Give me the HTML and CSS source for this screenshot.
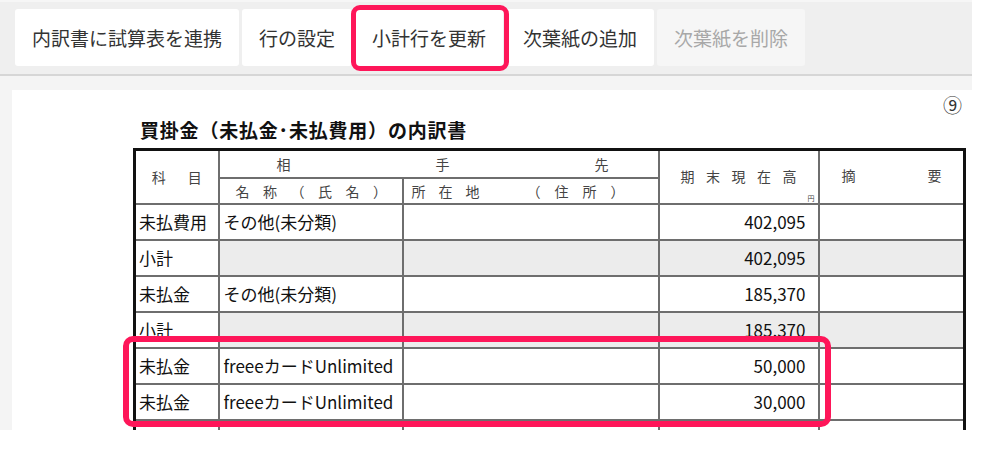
FILE: index.html
```html
<!DOCTYPE html>
<html lang="ja">
<head>
<meta charset="utf-8">
<title>内訳書</title>
<link rel="stylesheet" href="styles.css">
</head>
<body>
<div class="frame">
  <div class="toolbar">
    <button class="tb-btn">内訳書に試算表を連携</button>
    <button class="tb-btn">行の設定</button>
    <button class="tb-btn">小計行を更新</button>
    <button class="tb-btn">次葉紙の追加</button>
    <button class="tb-btn is-disabled">次葉紙を削除</button>
  </div>
  <div class="workspace">
    <div class="paper">
      <div class="page-no">⑨</div>
      <h1 class="doc-title">買掛金（未払金･未払費用）の内訳書</h1>
      <table class="sheet">
        <colgroup>
          <col class="c-kamoku">
          <col class="c-name">
          <col class="c-addr">
          <col class="c-amount">
          <col class="c-note">
        </colgroup>
        <thead>
          <tr class="h1">
            <th rowspan="2" class="th-kamoku">科　目</th>
            <th colspan="2" class="th-aite"><span>相</span><span>手</span><span>先</span></th>
            <th rowspan="2" class="th-amount"><span class="amt-label">期末現在高</span><span class="yen">円</span></th>
            <th rowspan="2" class="th-note"><span>摘</span><span>要</span></th>
          </tr>
          <tr class="h2">
            <th class="th-name">名称（氏名）</th>
            <th class="th-addr"><span class="g1">所在地</span><span class="g2">（住所）</span></th>
          </tr>
        </thead>
        <tbody>
          <tr>
            <td>未払費用</td><td>その他(未分類)</td><td></td><td class="num">402,095</td><td></td>
          </tr>
          <tr class="subtotal">
            <td>小計</td><td></td><td></td><td class="num">402,095</td><td></td>
          </tr>
          <tr>
            <td>未払金</td><td>その他(未分類)</td><td></td><td class="num">185,370</td><td></td>
          </tr>
          <tr class="subtotal">
            <td>小計</td><td></td><td></td><td class="num">185,370</td><td></td>
          </tr>
          <tr>
            <td>未払金</td><td>freeeカードUnlimited</td><td></td><td class="num">50,000</td><td></td>
          </tr>
          <tr>
            <td>未払金</td><td>freeeカードUnlimited</td><td></td><td class="num">30,000</td><td></td>
          </tr>
          <tr>
            <td></td><td></td><td></td><td class="num"></td><td></td>
          </tr>
        </tbody>
      </table>
    </div>
  </div>
  <div class="mark mark-btn"></div>
  <div class="mark mark-rows"></div>
</div>
</body>
</html>
```

FILE: styles.css
```css
* { box-sizing: border-box; }

html, body {
  margin: 0;
  padding: 0;
  background: #ffffff;
}

body {
  font-family: "Noto Sans CJK JP", "Noto Sans", sans-serif;
  color: #222;
}

.frame {
  position: relative;
  width: 972px;
  height: 430px;
  overflow: hidden;
  background: #f4f4f4;
}

.toolbar {
  height: 76px;
  background: #efefef;
  border-top: 2px solid #f6f6f6;
  border-bottom: 2px solid #d6d6d6;
  padding: 7px 15px 0;
  display: flex;
  gap: 3px;
  align-items: flex-start;
}

.tb-btn {
  height: 57px;
  padding: 0 17px;
  border: none;
  border-radius: 3px;
  background: #ffffff;
  font-family: "Noto Sans CJK JP", sans-serif;
  font-size: 19px;
  color: #333;
  line-height: 57px;
  white-space: nowrap;
}

.tb-btn.is-disabled {
  background: #f6f6f6;
  color: #a8a8a8;
}

.workspace {
  padding: 14px 0 0 12px;
}

.paper {
  background: #ffffff;
  height: 400px;
  padding: 4px 10px 0 121px;
}

.page-no {
  text-align: right;
  font-size: 19px;
  line-height: 22px;
  height: 22px;
  color: #333;
}

.doc-title {
  margin: 0 0 4px 7px;
  font-size: 19px;
  line-height: 28px;
  font-weight: 700;
  color: #111;
  letter-spacing: 0.8px;
}

.sheet {
  border-collapse: collapse;
  table-layout: fixed;
  width: 830px;
  border: 3px solid #111;
}

.c-kamoku { width: 84px; }
.c-name { width: 184px; }
.c-addr { width: 256px; }
.c-amount { width: 160px; }
.c-note { width: 146px; }

.sheet th,
.sheet td {
  border: 2px solid #6e6e6e;
  padding: 0;
}

.sheet th {
  font-weight: 400;
  font-size: 14px;
  color: #444;
  line-height: 18px;
  white-space: nowrap;
  overflow: hidden;
}

.sheet .h1 th { height: 28px; }
.sheet .h2 th { height: 26px; }

.sheet .th-kamoku {
  text-align: center;
  letter-spacing: 4px;
  padding-left: 4px;
}

.th-aite span {
  display: inline-block;
}

.sheet .th-aite {
  text-align: left;
  padding-left: 57px;
}

.th-aite span + span {
  margin-left: 145px;
}

.sheet .th-name {
  text-align: left;
  padding-left: 16px;
  letter-spacing: 13.5px;
}

.sheet .th-addr {
  text-align: left;
  padding-left: 8px;
}

.th-addr .g1 {
  letter-spacing: 13px;
}

.th-addr .g2 {
  letter-spacing: 14px;
  margin-left: 34px;
}

.sheet .th-amount {
  position: relative;
  text-align: center;
}

.amt-label {
  letter-spacing: 11.5px;
  padding-left: 11.5px;
  position: relative;
  top: -1px;
}

.yen {
  position: absolute;
  right: 3px;
  bottom: 1px;
  font-size: 7px;
  line-height: 8px;
  letter-spacing: 0;
}

.sheet .th-note {
  text-align: left;
  padding-left: 22px;
}

.th-note span + span {
  margin-left: 72px;
}

.th-note span {
  position: relative;
  top: -2px;
}

.sheet td {
  height: 36px;
  font-size: 17px;
  line-height: 22px;
  color: #111;
  padding-left: 3px;
  white-space: nowrap;
  overflow: hidden;
}

.sheet td + td {
  padding-left: 4px;
}

.sheet td.num {
  text-align: right;
  padding-right: 12px;
}

.subtotal td + td {
  background: #ececec;
}

.mark {
  position: absolute;
  border-style: solid;
  border-color: #fe1659;
  pointer-events: none;
}

.mark-btn {
  left: 351px;
  top: 5px;
  width: 158px;
  height: 66px;
  border-width: 5px;
  border-radius: 9px;
}

.mark-rows {
  left: 123px;
  top: 336px;
  width: 708px;
  height: 91px;
  border-width: 6px;
  border-radius: 10px;
}
```
